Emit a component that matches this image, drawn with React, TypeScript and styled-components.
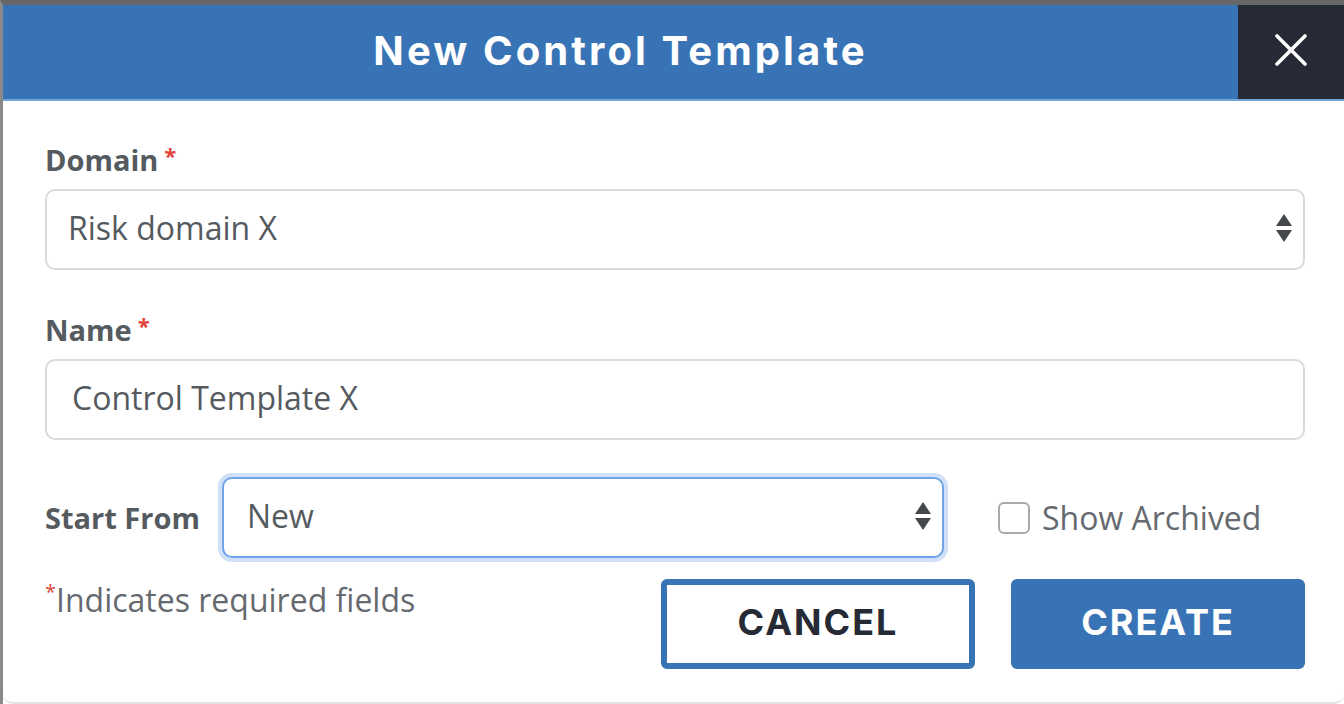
import React from "react";
import styled, { createGlobalStyle } from "styled-components";

const GlobalStyle = createGlobalStyle`
  html, body { margin: 0; padding: 0; background: #ffffff; }
  * { box-sizing: border-box; }
`;

const BLUE = "#3874b5";
const DARK = "#262a35";
const TEXT = "#555a5f";
const BODY_FONT = `"Open Sans", "Noto Sans", sans-serif`;
const HEAD_FONT = `Inter, "Noto Sans", sans-serif`;

const Frame = styled.div`
  width: 1344px;
  height: 704px;
  border-top: 5px solid #666666;
  border-left: 3px solid #8a8a8a;
  display: flex;
`;

const Modal = styled.div`
  flex: 1;
  display: flex;
  flex-direction: column;
  background: #ffffff;
  border-bottom: 2px solid #e2e2e2;
  border-bottom-left-radius: 10px;
  border-bottom-right-radius: 10px;
`;

const Header = styled.div`
  height: 96px;
  display: flex;
  background: ${BLUE};
  border-bottom: 2px solid #74a5da;
`;

const Title = styled.h1`
  flex: 1;
  margin: 0;
  display: flex;
  align-items: center;
  justify-content: center;
  padding-bottom: 4px;
  font-family: ${HEAD_FONT};
  font-weight: 700;
  font-size: 40px;
  letter-spacing: 3.1px;
  color: #ffffff;
`;

const CloseButton = styled.button`
  width: 106px;
  border: none;
  background: ${DARK};
  display: flex;
  align-items: center;
  justify-content: center;
  padding: 0 0 4px;
  cursor: pointer;
`;

const Body = styled.div`
  padding: 42px 39px 0 42px;
  display: flex;
  flex-direction: column;
`;

const Field = styled.div<{ $mb: number }>`
  display: flex;
  flex-direction: column;
  gap: 12px;
  margin-bottom: ${(p) => p.$mb}px;
`;

const Label = styled.label`
  font-family: ${BODY_FONT};
  font-weight: 700;
  font-size: 29px;
  line-height: 34px;
  color: ${TEXT};
  white-space: nowrap;
`;

const Req = styled.span`
  color: #e0443c;
  font-size: 22px;
  vertical-align: top;
  margin-left: 6px;
  line-height: 24px;
`;

const Box = styled.div<{ $focus?: boolean }>`
  height: 81px;
  display: flex;
  align-items: center;
  justify-content: space-between;
  padding: 0 10px 4px 21px;
  border-radius: 10px;
  border: 2px solid ${(p) => (p.$focus ? "#6fa3e6" : "#d7dbe0")};
  box-shadow: ${(p) => (p.$focus ? "0 0 0 4px #cfe0f8" : "none")};
  font-family: ${BODY_FONT};
  font-size: 32px;
  color: ${TEXT};
  background: #fff;
`;

const Value = styled.span<{ $pl?: number }>`
  padding-left: ${(p) => p.$pl ?? 0}px;
`;

const Row = styled.div`
  margin-top: 37px;
  display: flex;
  align-items: center;
`;

const RowLabel = styled(Label)`
  width: 177px;
  flex: none;
`;

const StartBox = styled(Box)`
  width: 722px;
  flex: none;
`;

const CheckWrap = styled.label`
  margin-left: 54px;
  display: flex;
  align-items: center;
  gap: 12px;
  font-family: ${BODY_FONT};
  font-size: 32px;
  color: #666a6f;
`;

const CheckBox = styled.span`
  width: 32px;
  height: 32px;
  border: 2px solid #a9a9a9;
  border-radius: 6px;
  display: inline-block;
`;

const Footer = styled.div`
  margin-top: 21px;
  display: flex;
  align-items: flex-start;
`;

const Note = styled.div`
  flex: 1;
  padding-top: 2px;
  font-family: ${BODY_FONT};
  font-size: 32px;
  line-height: 38px;
  color: #666a6f;
`;

const NoteStar = styled.span`
  color: #e0443c;
  font-size: 20px;
  vertical-align: top;
  line-height: 22px;
`;

const Buttons = styled.div`
  display: flex;
  gap: 36px;
`;

const Btn = styled.button<{ $primary?: boolean }>`
  height: 90px;
  width: ${(p) => (p.$primary ? 294 : 314)}px;
  border-radius: 6px;
  border: 6px solid ${BLUE};
  background: ${(p) => (p.$primary ? BLUE : "#fff")};
  color: ${(p) => (p.$primary ? "#fff" : DARK)};
  font-family: ${HEAD_FONT};
  font-weight: 700;
  font-size: 36px;
  letter-spacing: 2px;
  padding: 0 0 4px;
  cursor: pointer;
`;

const Arrows = () => (
  <svg width="18" height="30" viewBox="0 0 18 30">
    <path d="M9 1 L17 13 L1 13 Z" fill="#44484d" />
    <path d="M9 29 L17 17 L1 17 Z" fill="#44484d" />
  </svg>
);

const CloseIcon = () => (
  <svg width="32" height="32" viewBox="0 0 32 32">
    <path d="M2 2 L30 30 M30 2 L2 30" stroke="#fff" strokeWidth="3.6" strokeLinecap="round" />
  </svg>
);

export default function App() {
  return (
    <>
      <GlobalStyle />
      <Frame>
        <Modal>
          <Header>
            <Title>New Control Template</Title>
            <CloseButton aria-label="Close">
              <CloseIcon />
            </CloseButton>
          </Header>
          <Body>
            <Field $mb={43}>
              <Label>
                Domain<Req>*</Req>
              </Label>
              <Box>
                <Value>Risk domain X</Value>
                <Arrows />
              </Box>
            </Field>
            <Field $mb={0}>
              <Label>
                Name<Req>*</Req>
              </Label>
              <Box>
                <Value $pl={4}>Control Template X</Value>
              </Box>
            </Field>
            <Row>
              <RowLabel>Start From</RowLabel>
              <StartBox $focus>
                <Value $pl={2}>New</Value>
                <Arrows />
              </StartBox>
              <CheckWrap>
                <CheckBox />
                Show Archived
              </CheckWrap>
            </Row>
            <Footer>
              <Note>
                <NoteStar>*</NoteStar>Indicates required fields
              </Note>
              <Buttons>
                <Btn>CANCEL</Btn>
                <Btn $primary>CREATE</Btn>
              </Buttons>
            </Footer>
          </Body>
        </Modal>
      </Frame>
    </>
  );
}
